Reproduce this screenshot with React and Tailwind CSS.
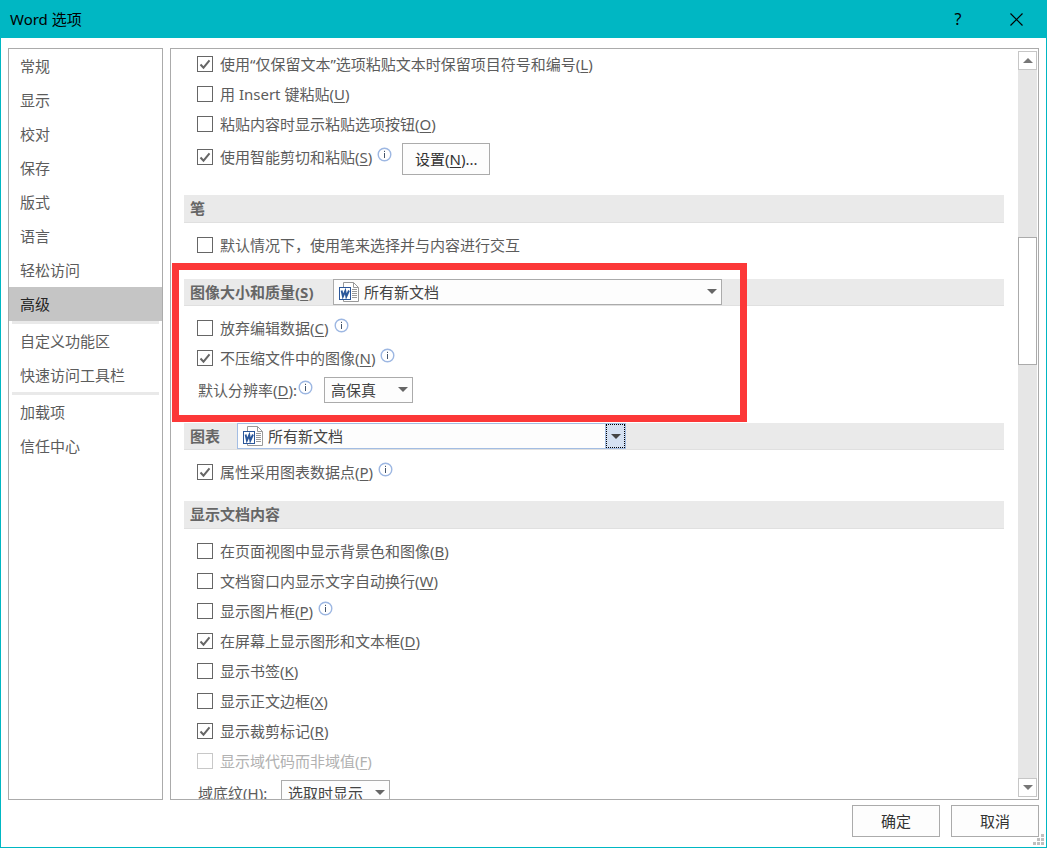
import React from 'react';

const navGroups = [
  ['常规', '显示', '校对', '保存', '版式', '语言', '轻松访问', '高级'],
  ['自定义功能区', '快速访问工具栏'],
  ['加载项', '信任中心'],
];

const pasteOptions = [
  { text: '使用“仅保留文本”选项粘贴文本时保留项目符号和编号', hotkey: 'L', checked: true },
  { text: '用 Insert 键粘贴', hotkey: 'U' },
  { text: '粘贴内容时显示粘贴选项按钮', hotkey: 'O' },
];

const displayOptions = [
  { text: '在页面视图中显示背景色和图像', hotkey: 'B' },
  { text: '文档窗口内显示文字自动换行', hotkey: 'W' },
  { text: '显示图片框', hotkey: 'P', info: true },
  { text: '在屏幕上显示图形和文本框', hotkey: 'D', checked: true },
  { text: '显示书签', hotkey: 'K' },
  { text: '显示正文边框', hotkey: 'X' },
  { text: '显示裁剪标记', hotkey: 'R', checked: true },
  { text: '显示域代码而非域值', hotkey: 'F', disabled: true },
];

const Hotkey = ({ letter }) => (
  <>(<u className="underline-offset-2">{letter}</u>)</>
);

const InfoIcon = () => (
  <svg width="15" height="15" viewBox="0 0 15 15" className="mb-[6px] shrink-0" fill="none">
    <circle cx="7.5" cy="7.5" r="6.3" stroke="#9db7e2" strokeWidth="1.4" />
    <path d="M7.5 6v5M7.5 3.8v1.2" stroke="#44546a" />
  </svg>
);

const WordDocIcon = () => (
  <svg width="20" height="20" viewBox="0 0 20 20" className="pointer-events-none absolute left-[6px] top-[3px]" fill="none">
    <path d="M4.5 5.5v-5h10l5 5v14h-15v-3" fill="#fff" stroke="#999" />
    <path d="M14.5.5v5h5" stroke="#999" />
    <path d="M13 7.5h5M13 9.5h5M13 11.5h5M13 13.5h5M13 15.5h5" stroke="#999" />
    <rect x=".5" y="5.5" width="11" height="12" fill="#fff" stroke="#2b579a" />
    <path d="M2.6 8.5l1.3 6L6.3 9l1 5.5L10 8.5" stroke="#2b579a" strokeWidth="1.9" />
  </svg>
);

const Triangle = ({ className = '' }) => (
  <svg width="10" height="5" viewBox="0 0 10 5" className={className} fill="currentColor">
    <path d="M0 0h10L5 5z" />
  </svg>
);

const CheckRow = ({ text, hotkey, checked, disabled, info, children, className = 'h-[30px]' }) => (
  <div className={`flex items-center pl-[13px] ${className}`}>
    <label className={`flex items-center whitespace-nowrap ${disabled ? 'text-[#b1b1b1]' : ''}`}>
      <span className="relative mr-[7px] size-4 shrink-0">
        <input
          type="checkbox"
          defaultChecked={checked}
          disabled={disabled}
          className="peer block size-4 appearance-none border border-[#666] bg-white disabled:border-[#c8c8c8]"
        />
        <svg
          viewBox="0 0 16 16"
          className="pointer-events-none absolute inset-0 hidden size-4 peer-checked:block"
          fill="none"
        >
          <path d="M3.5 8.5l3 3.2 6-7.4" stroke="#666" strokeWidth="2" />
        </svg>
      </span>
      <span>{text}{hotkey && <Hotkey letter={hotkey} />}</span>
    </label>
    {info && <span className="ml-[5px] flex"><InfoIcon /></span>}
    {children}
  </div>
);

const SectionBar = ({ children, className = 'h-7 pb-[2px]' }) => (
  <div className={`flex items-center border-b border-[#e0e0e0] bg-[#eaeaea] pl-[6px] font-bold text-[#666] ${className}`}>
    {children}
  </div>
);

const Dropdown = ({ id, value, icon, active, className }) => (
  <div className={`relative h-[26px] font-normal text-[#444] ${className}`}>
    <select
      id={id}
      defaultValue={value}
      className={`block h-full w-full appearance-none border bg-[#fdfdfd] pr-6 outline-none ${
        active ? 'border-[#a3bde3]' : 'border-[#ababab]'
      } ${icon ? 'pl-[30px]' : 'pl-[6px]'}`}
    >
      <option>{value}</option>
    </select>
    {icon && <WordDocIcon />}
    {active ? (
      <span className="pointer-events-none absolute inset-y-0 right-0 flex w-[21px] items-center justify-center border border-[#a3bde3] bg-[#d5e1f2]">
        <span className="absolute inset-0 border border-dotted border-black" />
        <Triangle className="text-[#444]" />
      </span>
    ) : (
      <Triangle className="pointer-events-none absolute right-[5px] top-[10px] text-[#666]" />
    )}
  </div>
);

const DialogButton = ({ children, className = '' }) => (
  <button
    type="button"
    className={`h-8 w-[88px] border border-[#ababab] bg-[#fdfdfd] text-[#333] ${className}`}
  >
    {children}
  </button>
);

const TitleBar = () => (
  <header className="flex h-[37px] shrink-0 items-center bg-[#00b7c3] px-[9px] pb-px text-black">
    <h1 className="flex-1">Word 选项</h1>
    <button type="button" aria-label="帮助" className="mr-4 h-8 w-[42px] text-base">?</button>
    <button type="button" aria-label="关闭" className="flex h-8 w-[42px] items-center justify-center">
      <svg width="13" height="13" viewBox="0 0 13 13" stroke="#000" strokeWidth="1.2">
        <path d="M.5.5l12 12M12.5.5l-12 12" />
      </svg>
    </button>
  </header>
);

const Sidebar = () => (
  <nav className="w-[155px] shrink-0 border border-[#ababab] bg-white">
    {navGroups.map((group, i) => (
      <div key={i}>
        {i > 0 && <div className="mx-[3px] h-[3px] bg-[#e9e9e9]" />}
        {group.map((item) => (
          <a
            key={item}
            href="#"
            className={`flex h-[34px] items-center pl-[11px] ${item === '高级' ? 'bg-[#c5c5c5] text-[#262626]' : ''}`}
          >
            {item}
          </a>
        ))}
      </div>
    ))}
  </nav>
);

const Scrollbar = () => (
  <div className="my-[2px] mr-px flex w-[19px] shrink-0 flex-col bg-[#e6e6e6]">
    <button type="button" aria-label="向上滚动" className="flex h-[19px] items-center justify-center border border-[#c6c6c6] bg-white text-[#777]">
      <Triangle className="rotate-180" />
    </button>
    <div className="flex flex-1 flex-col">
      <div className="grow-[167]" />
      <div className="h-32 border border-[#ababab] bg-white" />
      <div className="grow-[413]" />
    </div>
    <button type="button" aria-label="向下滚动" className="flex h-[19px] items-center justify-center border border-[#c6c6c6] bg-white text-[#777]">
      <Triangle />
    </button>
  </div>
);

const App = () => {
  return (
    <div className="flex h-screen flex-col border border-[#00b7c3] bg-white font-['Noto_Sans','Noto_Sans_CJK_SC',sans-serif] text-[15px] leading-5 text-[#5c5c5c]">
      <TitleBar />

      <div className="flex min-h-0 flex-1 gap-[7px] px-[7px] pt-[10px]">
        <Sidebar />

        <main className="flex min-w-0 flex-1 border border-[#ababab] bg-white">
          <div className="min-w-0 flex-1 overflow-hidden pl-[13px] pr-[14px]">
            {/* Cut, copy and paste */}
            <section className="mb-5">
              {pasteOptions.map((option) => (
                <CheckRow key={option.hotkey} {...option} />
              ))}
              <CheckRow text="使用智能剪切和粘贴" hotkey="S" checked info className="h-9">
                <DialogButton className="ml-[10px] self-end">
                  设置<Hotkey letter="N" />...
                </DialogButton>
              </CheckRow>
            </section>

            {/* Pen */}
            <section className="mb-[19px]">
              <SectionBar>笔</SectionBar>
              <div className="pt-[7px]">
                <CheckRow text="默认情况下，使用笔来选择并与内容进行交互" />
              </div>
            </section>

            {/* Image size and quality */}
            <section className="relative mb-5">
              <SectionBar className="h-[27px]">
                <label htmlFor="image-scope" className="w-[143px]">
                  图像大小和质量<Hotkey letter="S" />
                </label>
                <Dropdown id="image-scope" value="所有新文档" icon className="w-[389px]" />
              </SectionBar>
              <div className="pt-[7px]">
                <CheckRow text="放弃编辑数据" hotkey="C" info />
                <CheckRow text="不压缩文件中的图像" hotkey="N" checked info />
              </div>
              <div className="mt-1 flex items-center pl-[14px]">
                <div className="flex w-[126px] items-center gap-px">
                  <label htmlFor="resolution">默认分辨率<Hotkey letter="D" />:</label>
                  <InfoIcon />
                </div>
                <Dropdown id="resolution" value="高保真" className="w-[89px]" />
              </div>
              <div className="pointer-events-none absolute -bottom-[19px] -left-3 -top-4 w-[575px] border-[7px] border-[#fc3838]" />
            </section>

            {/* Chart */}
            <section className="mb-[14px]">
              <SectionBar className="h-[27px]">
                <label htmlFor="chart-scope" className="w-[47px]">图表</label>
                <Dropdown id="chart-scope" value="所有新文档" icon active className="w-[389px]" />
              </SectionBar>
              <div className="pt-[7px]">
                <CheckRow text="属性采用图表数据点" hotkey="P" checked info />
              </div>
            </section>

            {/* Show document content */}
            <section>
              <SectionBar>显示文档内容</SectionBar>
              <div className="pt-[7px]">
                {displayOptions.map((option) => (
                  <CheckRow key={option.hotkey} {...option} />
                ))}
              </div>
              <div className="mt-1 flex items-center pl-[14px]">
                <label htmlFor="field-shading" className="w-[83px]">
                  域底纹<Hotkey letter="H" />:
                </label>
                <Dropdown id="field-shading" value="选取时显示" className="w-[109px]" />
              </div>
            </section>
          </div>
          <Scrollbar />
        </main>
      </div>

      <footer className="relative flex shrink-0 justify-end gap-[11px] px-[7px] pb-[10px] pt-[5px]">
        <DialogButton>确定</DialogButton>
        <DialogButton>取消</DialogButton>
        <svg width="11" height="11" viewBox="0 0 11 11" className="absolute bottom-[2px] right-[2px]" fill="#bfbfbf">
          <path d="M8 0h3v3H8zM8 4h3v3H8zM4 4h3v3H4zM8 8h3v3H8zM4 8h3v3H4zM0 8h3v3H0z" />
        </svg>
      </footer>
    </div>
  );
};

export default App;
